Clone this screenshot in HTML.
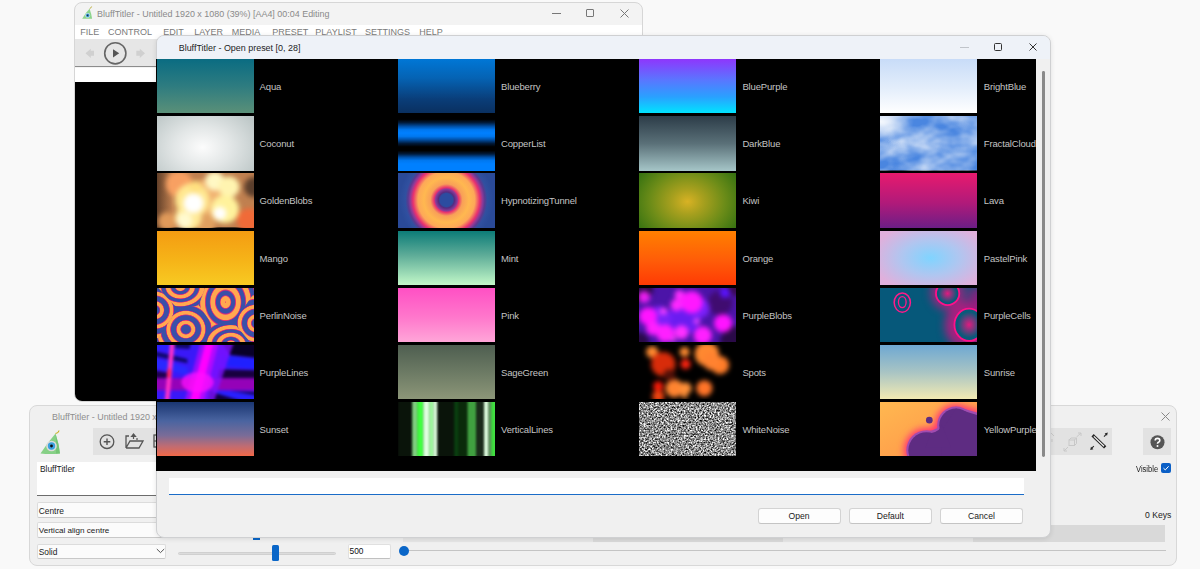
<!DOCTYPE html>
<html><head><meta charset="utf-8">
<style>
*{margin:0;padding:0;box-sizing:border-box}
html,body{width:1200px;height:569px;overflow:hidden;background:#f9f9f9;font-family:"Liberation Sans",sans-serif}
.a{position:absolute}
.t{position:absolute;white-space:nowrap;line-height:1}
#mw{left:74px;top:1.5px;width:568.5px;height:400.5px;border:1px solid #d6d6d6;border-radius:8px;background:#f3f3f3;overflow:hidden}
#bw{left:29px;top:405px;width:1148px;height:160.5px;border:1px solid #d8d8d8;border-radius:8px;background:#f0f0f0;overflow:hidden}
#dlg{left:156px;top:35px;width:894.5px;height:502.5px;border:1px solid #cfd0d2;border-radius:8px;background:#f0f0f0;overflow:hidden;box-shadow:0 1px 5px rgba(0,0,0,.10)}
.th{position:absolute;width:97.2px;height:54.4px;overflow:hidden}
.lb{position:absolute;font-size:9.5px;letter-spacing:-0.15px;color:#c4c4c4;white-space:nowrap;line-height:1}
.mi{position:absolute;top:27.5px;font-size:9px;color:#7a7a7a;white-space:nowrap;line-height:1}
.btn{position:absolute;top:508.3px;height:16px;width:83px;background:#fdfdfd;border:1px solid #d3d3d3;border-bottom-color:#c4c4c4;border-radius:3px;font-size:8.6px;color:#1a1a1a;text-align:center;line-height:14px}
.fld{position:absolute;background:#fbfbfb;border:1px solid #dcdcdc;border-bottom-color:#c8c8c8;border-radius:2px;font-size:8.4px;color:#1a1a1a;white-space:nowrap;line-height:1}
</style></head>
<body>
<!-- MAIN WINDOW -->
<div id="mw" class="a">
  <div class="a" style="left:0;top:22px;width:100%;height:14.2px;background:#fff"></div>
  <div class="a" style="left:0;top:36.2px;width:100%;height:28.8px;background:#e6e6e6;border-bottom:1px solid #8c8c8c"></div>
  <div class="a" style="left:0;top:65px;width:100%;height:14.5px;background:#fff"></div>
  <div class="a" style="left:0;top:79.5px;width:100%;height:330px;background:#000;border-radius:0 0 7px 7px"></div>
</div>
<!-- main title -->
<svg class="a" style="left:80px;top:5px" width="14" height="16" viewBox="0 0 14 16">
  <path d="M2.2,13.8Q6,7 9.6,3.7Q11.5,9 12.1,13.8Z" fill="#8cd48c"/>
  <circle cx="7.7" cy="10.4" r="2.4" fill="#d8e8f0"/><circle cx="7.7" cy="10.4" r="1.8" fill="#3a9ad8"/><circle cx="7.6" cy="10.4" r="0.8" fill="#1a2a3a"/>
  <path d="M9.6,3.7q1.5,-0.5 2,-2.2" stroke="#b8a830" stroke-width="0.9" fill="none"/>
</svg>
<div class="t" style="left:97px;top:9.6px;font-size:8.95px;color:#8a8a8a">BluffTitler - Untitled 1920 x 1080 (39%) [AA4] 00:04 Editing</div>
<div class="a" style="left:551.5px;top:13px;width:9px;height:1px;background:#777"></div>
<div class="a" style="left:586px;top:9px;width:8px;height:8px;border:1px solid #777;border-radius:1px"></div>
<svg class="a" style="left:619.5px;top:8.5px" width="9" height="9" viewBox="0 0 9 9"><path d="M0.5,0.5L8.5,8.5M8.5,0.5L0.5,8.5" stroke="#777" stroke-width="1"/></svg>
<div class="mi" style="left:80.3px">FILE</div>
<div class="mi" style="left:108px">CONTROL</div>
<div class="mi" style="left:163.3px">EDIT</div>
<div class="mi" style="left:194.2px">LAYER</div>
<div class="mi" style="left:231.7px">MEDIA</div>
<div class="mi" style="left:272.3px">PRESET</div>
<div class="mi" style="left:315.3px">PLAYLIST</div>
<div class="mi" style="left:365px">SETTINGS</div>
<div class="mi" style="left:419.3px">HELP</div>
<!-- toolbar icons -->
<svg class="a" style="left:84px;top:48px" width="13" height="11" viewBox="0 0 13 11"><path d="M1.5,5.3L6.8,0.7V2.8H10V7.8H6.8V9.9Z" fill="#d0d0d0"/></svg>
<svg class="a" style="left:134px;top:48px" width="13" height="11" viewBox="0 0 13 11"><path d="M11,5.3L5.8,0.7V2.8H2.3V7.8H5.8V9.9Z" fill="#d0d0d0"/></svg>
<svg class="a" style="left:103px;top:41px" width="25" height="25" viewBox="0 0 25 25"><circle cx="12.3" cy="12.3" r="10.6" fill="none" stroke="#666" stroke-width="1.6"/><path d="M10,8.3L16.2,12.3L10,16.6Z" fill="#555"/></svg>

<!-- BOTTOM WINDOW -->
<div id="bw" class="a"></div>
<div class="t" style="left:52px;top:412.5px;font-size:8.95px;color:#8e8e8e">BluffTitler - Untitled 1920 x 1080 (39%)</div>
<svg class="a" style="left:1160.5px;top:411.5px" width="9" height="9" viewBox="0 0 9 9"><path d="M0.5,0.5L8.5,8.5M8.5,0.5L0.5,8.5" stroke="#888" stroke-width="1"/></svg>
<svg class="a" style="left:39px;top:430px" width="24" height="26" viewBox="0 0 24 26">
  <path d="M1.5,23.5Q9,12 16.5,3.5Q20,14 21,23.5Q11,24.5 1.5,23.5Z" fill="#86d086"/>
  <path d="M16.5,3.5Q20,14 21,23.5L17,23.8Q17.5,12 16.5,3.5Z" fill="#6ec06e" opacity=".7"/>
  <circle cx="12.5" cy="16" r="5.3" fill="#dcdcdc"/><circle cx="12.5" cy="16" r="3.7" fill="#3aa0e0"/><circle cx="12.5" cy="16" r="1.4" fill="#111"/>
  <path d="M16.5,3.5q3,-0.5 3.5,-3" stroke="#c8b020" stroke-width="1.1" fill="none"/>
</svg>
<div class="a" style="left:93.4px;top:428px;width:1019px;height:27px;background:#e2e2e2"></div>
<div class="a" style="left:1143.2px;top:428px;width:27.5px;height:27px;background:#e2e2e2"></div>
<svg class="a" style="left:99px;top:434px" width="16" height="16" viewBox="0 0 16 16"><circle cx="8" cy="7.7" r="6.8" fill="none" stroke="#555" stroke-width="1.3"/><path d="M8,4.4V11M4.7,7.7H11.3" stroke="#555" stroke-width="1.4"/></svg>
<svg class="a" style="left:125px;top:433px" width="19" height="16" viewBox="0 0 19 16"><path d="M1,15V3H4M1,15H14L18,8H5L1,15" fill="none" stroke="#555" stroke-width="1.3"/><path d="M8.5,6V2M6.5,3.5L8.5,1L10.5,3.5Z" stroke="#555" stroke-width="1.2" fill="#555"/><path d="M12,5V7" stroke="#555" stroke-width="1.2"/></svg>
<svg class="a" style="left:153px;top:434px" width="6" height="15" viewBox="0 0 6 15"><rect x="1" y="1" width="8" height="12" fill="none" stroke="#555" stroke-width="1.3"/><path d="M1,7H6" stroke="#555" stroke-width="1.2"/></svg>
<svg class="a" style="left:1086px;top:429px" width="26" height="26" viewBox="0 0 26 26">
  <path d="M7.8,7.4L18,17.2" stroke="#262626" stroke-width="3.3" stroke-linecap="square"/>
  <path d="M7.8,7.4L18,17.2" stroke="#fafafa" stroke-width="1.2" stroke-linecap="butt"/>
  <path d="M18,7.6L20.4,5.2" stroke="#262626" stroke-width="1.1"/><path d="M21.8,3.6L18.6,4.4L21,6.8Z" fill="#262626"/>
  <path d="M7.8,17.2L5.6,19.4" stroke="#262626" stroke-width="1.1"/><path d="M4.2,21L5,17.8L7.4,20.2Z" fill="#262626"/>
</svg>
<svg class="a" style="left:1063px;top:432px" width="20" height="20" viewBox="0 0 20 20" opacity=".35">
  <rect x="6" y="8" width="5.5" height="5.5" fill="none" stroke="#999" stroke-width="1"/><path d="M6,8L8,6H13.5V11.5L11.5,13.5M11.5,8L13.5,6" stroke="#999" stroke-width="1" fill="none"/>
  <path d="M13.5,5L18,1M18,1H15M18,1V4M5,15L1,19M1,19H4M1,19V16" stroke="#999" stroke-width="1" fill="none"/>
</svg>
<svg class="a" style="left:1050px;top:431px" width="6" height="20" viewBox="0 0 6 20" opacity=".35"><path d="M1,2L4,5M2,8V11" stroke="#999" stroke-width="1"/></svg>
<svg class="a" style="left:1149.5px;top:434.5px" width="15" height="15" viewBox="0 0 15 15"><circle cx="7.5" cy="7.3" r="7" fill="#555"/><path d="M5.2,5.6Q5.2,3.4 7.5,3.4Q9.8,3.4 9.8,5.4Q9.8,6.6 8.4,7.3Q7.5,7.8 7.5,8.8" stroke="#fff" stroke-width="1.6" fill="none"/><circle cx="7.5" cy="11" r="1" fill="#fff"/></svg>
<div class="t" style="left:1136px;top:465.3px;font-size:8.4px;color:#1a1a1a;transform:scaleX(.9);transform-origin:left">Visible</div>
<div class="a" style="left:1161.2px;top:463.2px;width:9.6px;height:9.8px;background:#0b5fc6;border-radius:2px"></div>
<svg class="a" style="left:1161.2px;top:463.2px" width="10" height="10" viewBox="0 0 10 10"><path d="M2.5,5.2L4.3,6.9L7.6,3.3" stroke="#fff" stroke-width="1" fill="none"/></svg>
<div class="t" style="left:1145px;top:510.6px;font-size:8.6px;color:#1a1a1a">0 Keys</div>
<div class="a" style="left:403px;top:525px;width:190px;height:16.7px;background:#e6e6e6"></div>
<div class="a" style="left:593px;top:525px;width:190px;height:16.7px;background:#d9d9d9"></div>
<div class="a" style="left:783px;top:525px;width:190px;height:16.7px;background:#e6e6e6"></div>
<div class="a" style="left:973.3px;top:525px;width:191.7px;height:16.7px;background:#d9d9d9"></div>
<div class="a" style="left:404px;top:550.2px;width:761.5px;height:1px;background:#c4c4c4"></div>
<div class="a" style="left:399.3px;top:545.8px;width:10px;height:10px;border-radius:50%;background:#0a66c8"></div>
<div class="a" style="left:347.5px;top:543.8px;width:43.8px;height:15px;background:#fff;border:1px solid #e0e0e0;border-bottom-color:#c0c0c0;border-radius:2px"></div>
<div class="t" style="left:349.5px;top:547px;font-size:8.4px;color:#111">500</div>
<div class="a" style="left:178px;top:551.5px;width:157.5px;height:3px;background:#dcdcdc;border:1px solid #d0d0d0;border-radius:2px"></div>
<div class="a" style="left:271.75px;top:545px;width:7.5px;height:15.5px;background:#0a66c8;border-radius:1.5px"></div>
<div class="a" style="left:252.5px;top:537px;width:7.5px;height:2.5px;background:#0a66c8"></div>
<div class="a" style="left:36.8px;top:461.8px;width:140px;height:34px;background:#fff;border-bottom:1px solid #6c6c6c"></div>
<div class="t" style="left:40px;top:465.4px;font-size:8.4px;color:#1a1a1a">BluffTitler</div>
<div class="fld" style="left:36.8px;top:502.4px;width:140px;height:15.5px"></div>
<div class="t" style="left:38.7px;top:507px;font-size:8.4px;color:#1a1a1a">Centre</div>
<div class="fld" style="left:36.8px;top:522.3px;width:140px;height:15.5px"></div>
<div class="t" style="left:38.7px;top:526.9px;font-size:8.1px;color:#1a1a1a">Vertical align centre</div>
<div class="fld" style="left:36.8px;top:543.6px;width:129.6px;height:15px"></div>
<div class="t" style="left:38.7px;top:548.1px;font-size:8.4px;color:#1a1a1a">Solid</div>
<svg class="a" style="left:155.5px;top:547.5px" width="9" height="6" viewBox="0 0 9 6"><path d="M0.8,1L4.5,4.6L8.2,1" stroke="#555" stroke-width="1" fill="none"/></svg>

<!-- DIALOG -->
<div id="dlg" class="a">
  <div class="a" style="left:0;top:0;width:100%;height:23px;background:#eef2f8"></div>
  <div class="a" style="left:0;top:23px;width:879px;height:412px;background:#000"></div>
  <div class="a" style="left:885.2px;top:35px;width:2.8px;height:386px;background:#8a8a8a;border-radius:1.4px"></div>
  <div class="a" style="left:12px;top:442px;width:855px;height:17px;background:#fff;border-bottom:1.5px solid #1a6cc8"></div>
</div>
<div class="t" style="left:178.7px;top:44.3px;font-size:8.95px;color:#1c1c1c">BluffTitler - Open preset [0, 28]</div>
<div class="a" style="left:959.5px;top:46.5px;width:9px;height:1px;background:#c0c4ca"></div>
<div class="a" style="left:994px;top:43px;width:8px;height:8px;border:1px solid #333;border-radius:1.5px"></div>
<svg class="a" style="left:1029px;top:43px" width="8" height="8" viewBox="0 0 8 8"><path d="M0.5,0.5L7.5,7.5M7.5,0.5L0.5,7.5" stroke="#333" stroke-width="1"/></svg>
<div class="btn" style="left:757.5px">Open</div>
<div class="btn" style="left:848.8px">Default</div>
<div class="btn" style="left:940px">Cancel</div>
<div class="a" style="left:156px;top:58.8px;width:880px;height:412.2px;background:#000"></div>
<div class="a" style="left:0;top:0;width:1036px;height:569px;overflow:hidden"><div class="th" style="left:157.00px;top:59.00px;background:linear-gradient(#0a6c82,#2e7c80 50%,#5a9078);"></div>
<div class="lb" style="left:259.60px;top:82.00px">Aqua</div>
<div class="th" style="left:398.10px;top:59.00px;background:linear-gradient(#0077d6,#0563b4 35%,#0a3d78 75%,#0a3060);"></div>
<div class="lb" style="left:501.00px;top:82.00px">Blueberry</div>
<div class="th" style="left:639.20px;top:59.00px;background:linear-gradient(#8e36fc,#5878ff 40%,#2aa0ff 70%,#00e4ff);"></div>
<div class="lb" style="left:742.40px;top:82.00px">BluePurple</div>
<div class="th" style="left:880.30px;top:59.00px;background:linear-gradient(#c8dcf8,#e4eefb 55%,#ffffff);"></div>
<div class="lb" style="left:983.80px;top:82.00px">BrightBlue</div>
<div class="th" style="left:157.00px;top:116.17px;background:radial-gradient(ellipse 65% 85% at 47% 57%,#fcfcfc,#e2e6e6 45%,#bcc6c6 100%);"></div>
<div class="lb" style="left:259.60px;top:139.17px">Coconut</div>
<div class="th" style="left:398.10px;top:116.17px;background:linear-gradient(#000 0%,#000 6%,#001a3a 12%,#0050a8 19%,#0078f0 25%,#0080ff 31%,#0078f0 37%,#0050a8 43%,#001a3a 50%,#000 56%,#000 63%,#001a3a 69%,#0050a8 75%,#0078f0 81%,#0080ff 87%,#0080ff 100%);"></div>
<div class="lb" style="left:501.00px;top:139.17px">CopperList</div>
<div class="th" style="left:639.20px;top:116.17px;background:linear-gradient(#2c3c48,#5a7078 50%,#a6c6c8);"></div>
<div class="lb" style="left:742.40px;top:139.17px">DarkBlue</div>
<div class="th" style="left:880.30px;top:116.17px;"><svg width="100%" height="100%" viewBox="0 0 96 54" preserveAspectRatio="none" style="display:block"><defs><filter color-interpolation-filters="sRGB" id="fcf" x="0" y="0" width="100%" height="100%"><feTurbulence type="fractalNoise" baseFrequency="0.035 0.055" numOctaves="3" seed="11"/><feColorMatrix type="matrix" values="0 0 0 0 1  0 0 0 0 1  0 0 0 0 1  1.15 0 0 0 -0.30"/></filter><radialGradient id="fcg" cx="0" cy="0.1" r="0.35"><stop offset="0" stop-color="#fff" stop-opacity=".9"/><stop offset="1" stop-color="#fff" stop-opacity="0"/></radialGradient></defs><rect width="96" height="54" fill="#4a86e0"/><rect width="96" height="54" filter="url(#fcf)"/><rect width="96" height="54" fill="url(#fcg)"/></svg></div>
<div class="lb" style="left:983.80px;top:139.17px">FractalCloud</div>
<div class="th" style="left:157.00px;top:173.34px;"><svg width="100%" height="100%" viewBox="0 0 96 54" preserveAspectRatio="none" style="display:block"><defs><filter color-interpolation-filters="sRGB" id="blgb" x="-30%" y="-30%" width="160%" height="160%"><feGaussianBlur stdDeviation="2.4"/></filter><linearGradient id="gbl"><stop offset="0" stop-color="#3a2418" stop-opacity=".7"/><stop offset=".16" stop-color="#3a2418" stop-opacity="0"/></linearGradient></defs><rect width="96" height="54" fill="#c08050"/><rect width="96" height="54" fill="url(#gbl)"/><g filter="url(#blgb)"><circle cx="96" cy="14" r="10" fill="#5a3e2c" opacity="1"/><circle cx="22" cy="11" r="13" fill="#f8a062" opacity="1"/><circle cx="91" cy="47" r="12" fill="#f06a38" opacity="1"/><circle cx="50" cy="24" r="18" fill="#f0b070" opacity="1"/><circle cx="48" cy="50" r="10" fill="#e0a060" opacity="1"/><circle cx="10" cy="48" r="9" fill="#e09a5a" opacity="1"/><circle cx="35" cy="27" r="17" fill="#ffe890" opacity="1"/><circle cx="31" cy="44" r="13" fill="#ffea98" opacity="1"/><circle cx="57" cy="8" r="9.5" fill="#fff8c4" opacity="1"/><circle cx="71" cy="14" r="10.5" fill="#fff4b0" opacity="1"/><circle cx="67" cy="36" r="14" fill="#fff29c" opacity="1"/><circle cx="36" cy="30" r="10" fill="#ffffff" opacity="1"/><circle cx="62" cy="40" r="6.5" fill="#ffffff" opacity="1"/><circle cx="27" cy="47" r="8" fill="#fffad0" opacity="1"/><circle cx="38" cy="14" r="6" fill="#ffe080" opacity="1"/></g></svg></div>
<div class="lb" style="left:259.60px;top:196.34px">GoldenBlobs</div>
<div class="th" style="left:398.10px;top:173.34px;background:radial-gradient(circle at 48.4px 27px,#2c4ca0 0,#2c4ca0 6.5px,#542c80 8px,#8a3a98 10.9px,#e83070 12.3px,#f8a058 16px,#ffb850 22.5px,#fda858 28.4px,#e83070 33.4px,#8a3a98 36.3px,#5a3a90 38.4px,#3050a0 41px,#2a4a98 47px,#2a4a98 80px);"></div>
<div class="lb" style="left:501.00px;top:196.34px">HypnotizingTunnel</div>
<div class="th" style="left:639.20px;top:173.34px;background:radial-gradient(ellipse 62px 50px at 50% 52%,#d8b224 0,#a8a01e 25%,#6c8c18 60%,#2e6e10 100%);"></div>
<div class="lb" style="left:742.40px;top:196.34px">Kiwi</div>
<div class="th" style="left:880.30px;top:173.34px;background:linear-gradient(#e81a6e,#b01a7a 55%,#6c1e86);"></div>
<div class="lb" style="left:983.80px;top:196.34px">Lava</div>
<div class="th" style="left:157.00px;top:230.51px;background:linear-gradient(#f49c12,#f6b418 55%,#f8ca22);"></div>
<div class="lb" style="left:259.60px;top:253.51px">Mango</div>
<div class="th" style="left:398.10px;top:230.51px;background:linear-gradient(#0c7c78,#5eac98 45%,#c2f8c8);"></div>
<div class="lb" style="left:501.00px;top:253.51px">Mint</div>
<div class="th" style="left:639.20px;top:230.51px;background:linear-gradient(#ff8000,#ff5c08 55%,#ff3a04);"></div>
<div class="lb" style="left:742.40px;top:253.51px">Orange</div>
<div class="th" style="left:880.30px;top:230.51px;background:radial-gradient(ellipse 60% 65% at 52% 50%,#80d4ff,#b0c6f0 50%,#e0b0dc 100%);"></div>
<div class="lb" style="left:983.80px;top:253.51px">PastelPink</div>
<div class="th" style="left:157.00px;top:287.68px;"><svg width="100%" height="100%" viewBox="0 0 96 54" preserveAspectRatio="none" style="display:block"><defs><radialGradient id="pn0" gradientUnits="userSpaceOnUse" cx="23" cy="-1" r="9.5" fx="23" fy="-1" spreadMethod="repeat" gradientTransform="translate(23 -1) scale(1 0.8) translate(-23 1)"><stop offset="0" stop-color="#e83070"/><stop offset="0.08" stop-color="#ffa850"/><stop offset="0.46" stop-color="#ffa850"/><stop offset="0.52" stop-color="#e83070"/><stop offset="0.56" stop-color="#8a3a98"/><stop offset="0.6" stop-color="#3a50a8"/><stop offset="0.9" stop-color="#3a50a8"/><stop offset="0.95" stop-color="#8a3a98"/><stop offset="1.0" stop-color="#e83070"/></radialGradient><radialGradient id="pn1" gradientUnits="userSpaceOnUse" cx="-2" cy="22" r="9.5" fx="-2" fy="22" spreadMethod="repeat" gradientTransform="translate(-2 22) scale(1 1.0) translate(2 -22)"><stop offset="0" stop-color="#3a50a8"/><stop offset="0.42" stop-color="#3a50a8"/><stop offset="0.47" stop-color="#8a3a98"/><stop offset="0.52" stop-color="#e83070"/><stop offset="0.58" stop-color="#ffa850"/><stop offset="0.88" stop-color="#ffa850"/><stop offset="0.93" stop-color="#e83070"/><stop offset="0.97" stop-color="#8a3a98"/><stop offset="1.0" stop-color="#3a50a8"/></radialGradient><radialGradient id="pn2" gradientUnits="userSpaceOnUse" cx="67.7" cy="14" r="10" fx="67.7" fy="14" spreadMethod="repeat" gradientTransform="translate(67.7 14) scale(1 1.2) translate(-67.7 -14)"><stop offset="0" stop-color="#e83070"/><stop offset="0.08" stop-color="#ffa850"/><stop offset="0.46" stop-color="#ffa850"/><stop offset="0.52" stop-color="#e83070"/><stop offset="0.56" stop-color="#8a3a98"/><stop offset="0.6" stop-color="#3a50a8"/><stop offset="0.9" stop-color="#3a50a8"/><stop offset="0.95" stop-color="#8a3a98"/><stop offset="1.0" stop-color="#e83070"/></radialGradient><radialGradient id="pn3" gradientUnits="userSpaceOnUse" cx="28.5" cy="41" r="10" fx="28.5" fy="41" spreadMethod="repeat" gradientTransform="translate(28.5 41) scale(1 0.95) translate(-28.5 -41)"><stop offset="0" stop-color="#3a50a8"/><stop offset="0.42" stop-color="#3a50a8"/><stop offset="0.47" stop-color="#8a3a98"/><stop offset="0.52" stop-color="#e83070"/><stop offset="0.58" stop-color="#ffa850"/><stop offset="0.88" stop-color="#ffa850"/><stop offset="0.93" stop-color="#e83070"/><stop offset="0.97" stop-color="#8a3a98"/><stop offset="1.0" stop-color="#3a50a8"/></radialGradient><radialGradient id="pn4" gradientUnits="userSpaceOnUse" cx="73" cy="56" r="9.5" fx="73" fy="56" spreadMethod="repeat" gradientTransform="translate(73 56) scale(1 0.8) translate(-73 -56)"><stop offset="0" stop-color="#e83070"/><stop offset="0.08" stop-color="#ffa850"/><stop offset="0.46" stop-color="#ffa850"/><stop offset="0.52" stop-color="#e83070"/><stop offset="0.56" stop-color="#8a3a98"/><stop offset="0.6" stop-color="#3a50a8"/><stop offset="0.9" stop-color="#3a50a8"/><stop offset="0.95" stop-color="#8a3a98"/><stop offset="1.0" stop-color="#e83070"/></radialGradient><radialGradient id="pn5" gradientUnits="userSpaceOnUse" cx="98" cy="35" r="9.5" fx="98" fy="35" spreadMethod="repeat" gradientTransform="translate(98 35) scale(1 1.0) translate(-98 -35)"><stop offset="0" stop-color="#3a50a8"/><stop offset="0.42" stop-color="#3a50a8"/><stop offset="0.47" stop-color="#8a3a98"/><stop offset="0.52" stop-color="#e83070"/><stop offset="0.58" stop-color="#ffa850"/><stop offset="0.88" stop-color="#ffa850"/><stop offset="0.93" stop-color="#e83070"/><stop offset="0.97" stop-color="#8a3a98"/><stop offset="1.0" stop-color="#3a50a8"/></radialGradient><filter color-interpolation-filters="sRGB" id="pnbl" x="0" y="0" width="100%" height="100%"><feGaussianBlur stdDeviation="0.7"/></filter></defs><rect width="96" height="54" fill="#3a50a8"/><g filter="url(#pnbl)"><polygon points="-1.00,-2.00 48.20,-2.00 41.51,17.94 19.94,20.76" fill="url(#pn0)" stroke="url(#pn0)" stroke-width="0.8"/><polygon points="-2.00,-2.00 -1.00,-2.00 19.94,20.76 -2.00,55.98" fill="url(#pn1)" stroke="url(#pn1)" stroke-width="0.8"/><polygon points="48.20,-2.00 98.00,-2.00 98.00,2.64 76.07,34.28 54.63,36.98 41.51,17.94" fill="url(#pn2)" stroke="url(#pn2)" stroke-width="0.8"/><polygon points="48.22,56.00 -2.00,56.00 -2.00,55.98 19.94,20.76 41.51,17.94 54.63,36.98" fill="url(#pn3)" stroke="url(#pn3)" stroke-width="0.8"/><polygon points="94.32,56.00 48.22,56.00 54.63,36.98 76.07,34.28" fill="url(#pn4)" stroke="url(#pn4)" stroke-width="0.8"/><polygon points="98.00,2.64 98.00,56.00 94.32,56.00 76.07,34.28" fill="url(#pn5)" stroke="url(#pn5)" stroke-width="0.8"/></g></svg></div>
<div class="lb" style="left:259.60px;top:310.68px">PerlinNoise</div>
<div class="th" style="left:398.10px;top:287.68px;background:linear-gradient(#ff50c4,#ff78cc 55%,#ffa6d8);"></div>
<div class="lb" style="left:501.00px;top:310.68px">Pink</div>
<div class="th" style="left:639.20px;top:287.68px;"><svg width="100%" height="100%" viewBox="0 0 96 54" preserveAspectRatio="none" style="display:block"><defs><filter color-interpolation-filters="sRGB" id="blpb" x="-30%" y="-30%" width="160%" height="160%"><feGaussianBlur stdDeviation="2.6"/></filter></defs><rect width="96" height="54" fill="#4c14a8"/><g filter="url(#blpb)"><circle cx="0" cy="0" r="14" fill="#2a0a48" opacity="1"/><circle cx="96" cy="54" r="16" fill="#2a0a48" opacity="1"/><circle cx="96" cy="0" r="8" fill="#3a0a50" opacity="1"/><circle cx="0" cy="54" r="10" fill="#2a0a48" opacity="1"/><circle cx="80" cy="15" r="12" fill="#400c70" opacity="1"/><circle cx="45" cy="30" r="16" fill="#6a1cf0" opacity="1"/><circle cx="60" cy="20" r="10" fill="#7a20f8" opacity="1"/><circle cx="20" cy="30" r="12" fill="#7a20f8" opacity="1"/><circle cx="5" cy="9" r="6" fill="#ff20ff" opacity="0.9"/><circle cx="40" cy="7" r="5" fill="#ff30ff" opacity="1"/><circle cx="52" cy="14" r="11" fill="#ff18ff" opacity="1"/><circle cx="37" cy="17" r="6" fill="#ff28ff" opacity="1"/><circle cx="24" cy="23" r="3.5" fill="#ff40ff" opacity="1"/><circle cx="9" cy="28" r="9" fill="#ff14ff" opacity="1"/><circle cx="14" cy="40" r="7" fill="#ff20ff" opacity="1"/><circle cx="26" cy="45" r="9" fill="#ff20ff" opacity="1"/><circle cx="42" cy="44" r="7" fill="#ff30ff" opacity="1"/><circle cx="63" cy="47" r="9" fill="#ff20ff" opacity="1"/><circle cx="83" cy="35" r="9" fill="#ff14ff" opacity="1"/><circle cx="57" cy="33" r="2.8" fill="#ff48ff" opacity="1"/><circle cx="34" cy="51" r="2.5" fill="#ff48ff" opacity="1"/><circle cx="85" cy="5" r="5" fill="#5a14ff" opacity="1"/></g></svg></div>
<div class="lb" style="left:742.40px;top:310.68px">PurpleBlobs</div>
<div class="th" style="left:880.30px;top:287.68px;"><svg width="100%" height="100%" viewBox="0 0 96 54" preserveAspectRatio="none" style="display:block"><defs><radialGradient id="pcr"><stop offset="0" stop-color="#e01a80"/><stop offset=".8" stop-color="#0a5a7a"/></radialGradient><filter color-interpolation-filters="sRGB" id="pcg1" x="-50%" y="-50%" width="200%" height="200%"><feGaussianBlur stdDeviation="4"/></filter><filter color-interpolation-filters="sRGB" id="pcb"><feGaussianBlur stdDeviation="0.6"/></filter></defs><rect width="96" height="54" fill="#06587a"/><g filter="url(#pcg1)"><circle cx="67" cy="5" r="17" fill="#c01880" opacity=".75"/><ellipse cx="87" cy="37" rx="23" ry="24" fill="#c01880" opacity=".85"/><rect x="88" y="0" width="20" height="30" fill="#a01880" opacity=".8"/></g><g filter="url(#pcb)"><ellipse cx="22" cy="14.5" rx="8" ry="9.5" fill="none" stroke="#ff1a8a" stroke-width="1.5"/><ellipse cx="22" cy="14" rx="3.8" ry="5.5" fill="none" stroke="#ff1a8a" stroke-width="1.3"/><circle cx="66.8" cy="5.5" r="11.5" fill="url(#pcr)" stroke="#ff108a" stroke-width="1.8"/><ellipse cx="88" cy="36.5" rx="14.5" ry="16" fill="url(#pcr)" stroke="#ff108a" stroke-width="1.8"/></g></svg></div>
<div class="lb" style="left:983.80px;top:310.68px">PurpleCells</div>
<div class="th" style="left:157.00px;top:344.85px;"><svg width="100%" height="100%" viewBox="0 0 96 54" preserveAspectRatio="none" style="display:block"><defs><filter color-interpolation-filters="sRGB" id="plb" x="0" y="0" width="100%" height="100%"><feGaussianBlur stdDeviation="1.4"/></filter></defs><rect width="96" height="54" fill="#3a18f8"/><g filter="url(#plb)"><rect x="-3" y="-3" width="102" height="60" fill="#3a18f8"/><polygon points="64,-3 99,-3 99,13 72,10" fill="#080028"/><polygon points="62,24 99,25 99,33 60,33" fill="#180040"/><polygon points="-3,6 30,14 30,18 -3,11" fill="#10086a"/><polygon points="16,-3 34,-3 32,4 18,3" fill="#10086a"/><polygon points="-3,25 14,28 14,33 -3,33" fill="#200050"/><polygon points="52,45 99,47 99,57 50,57" fill="#100040"/><polygon points="55,43 99,50 99,57 88,57 55,47" fill="#2a20ff"/><polygon points="62,10 99,14 99,24 62,20" fill="#2020ff"/><polygon points="-3,-3 16,-3 16,6 -3,4" fill="#2a20ff"/><polygon points="-3,13 30,22 30,30 -3,22" fill="#2a28ff"/><rect x="-3" y="33" width="102" height="12" fill="#a000b0" opacity=".9"/><polygon points="55,-3 76,-3 56,57 41,57" fill="#8010ff" opacity=".8"/><polygon points="43,-3 61,-3 46,57 27,57" fill="#ff00ff" opacity=".45"/><polygon points="48,-3 56,-3 41,57 32,57" fill="#ff00ff"/><ellipse cx="40" cy="37" rx="16" ry="10" fill="#ff10ff" opacity=".75"/><polygon points="13,-3 17.5,-3 12,57 7.5,57" fill="#ff30c8"/><ellipse cx="12" cy="28" rx="2" ry="5" fill="#ff2060"/></g></svg></div>
<div class="lb" style="left:259.60px;top:367.85px">PurpleLines</div>
<div class="th" style="left:398.10px;top:344.85px;background:linear-gradient(#4e5e50,#6c7a64 50%,#8c9678);"></div>
<div class="lb" style="left:501.00px;top:367.85px">SageGreen</div>
<div class="th" style="left:639.20px;top:344.85px;"><svg width="100%" height="100%" viewBox="0 0 96 54" preserveAspectRatio="none" style="display:block"><defs><filter color-interpolation-filters="sRGB" id="blsp" x="-30%" y="-30%" width="160%" height="160%"><feGaussianBlur stdDeviation="2.8"/></filter></defs><rect width="96" height="54" fill="#000"/><g filter="url(#blsp)"><circle cx="13" cy="7" r="6" fill="#ff8a30" opacity="1"/><circle cx="24" cy="19" r="12" fill="#d82c0a" opacity="1"/><circle cx="45" cy="7" r="5" fill="#ff8a30" opacity="1"/><circle cx="46" cy="19" r="5" fill="#ff2410" opacity="1"/><circle cx="67" cy="9" r="12" fill="#ff8830" opacity="1"/><circle cx="80" cy="20" r="9" fill="#ff7c28" opacity="1"/><circle cx="72" cy="16" r="9" fill="#ff8230" opacity="1"/><circle cx="19" cy="41" r="5" fill="#ff1a08" opacity="1"/><circle cx="35" cy="43" r="9" fill="#ff8430" opacity="1"/><circle cx="46" cy="43" r="6" fill="#ff9038" opacity="1"/><circle cx="64.5" cy="43" r="8" fill="#ff7428" opacity="1"/><circle cx="19" cy="51" r="6" fill="#f04410" opacity="1"/><circle cx="45" cy="50" r="3" fill="#ff9038" opacity="1"/><circle cx="30" cy="30" r="6" fill="#501008" opacity="1"/></g></svg></div>
<div class="lb" style="left:742.40px;top:367.85px">Spots</div>
<div class="th" style="left:880.30px;top:344.85px;background:linear-gradient(#6ea8d2,#a8c4c4 50%,#f2eab2);"></div>
<div class="lb" style="left:983.80px;top:367.85px">Sunrise</div>
<div class="th" style="left:157.00px;top:402.02px;background:linear-gradient(#1a3672,#4a64a0 35%,#7a6c98 62%,#c06c72 82%,#f06848);"></div>
<div class="lb" style="left:259.60px;top:425.02px">Sunset</div>
<div class="th" style="left:398.10px;top:402.02px;"><svg width="100%" height="100%" viewBox="0 0 96 54" preserveAspectRatio="none" style="display:block"><defs><filter color-interpolation-filters="sRGB" id="vlb" x="-5%" y="0" width="110%" height="100%"><feGaussianBlur stdDeviation="0.9 0"/></filter></defs><rect width="96" height="54" fill="#000"/><g filter="url(#vlb)"><rect x="0" y="-5" width="14" height="64" fill="#0a140a"/><rect x="14" y="-5" width="5" height="64" fill="#80d080"/><rect x="19" y="-5" width="6" height="64" fill="#40ff40"/><rect x="25" y="-5" width="6" height="64" fill="#e0ffe0"/><rect x="31" y="-5" width="4" height="64" fill="#a0ffa0"/><rect x="35" y="-5" width="4" height="64" fill="#e0ffe0"/><rect x="39" y="-5" width="16.5" height="64" fill="#0a140a"/><rect x="55.5" y="-5" width="4.5" height="64" fill="#0a4010"/><rect x="60" y="-5" width="8.599999999999994" height="64" fill="#0a2a0a"/><rect x="68.6" y="-5" width="8.700000000000003" height="64" fill="#40a040"/><rect x="77.3" y="-5" width="7.700000000000003" height="64" fill="#1a2a1a"/><rect x="85" y="-5" width="4.299999999999997" height="64" fill="#e0ffe0"/><rect x="89.3" y="-5" width="2.700000000000003" height="64" fill="#609060"/><rect x="92" y="-5" width="6" height="64" fill="#40e040"/></g></svg></div>
<div class="lb" style="left:501.00px;top:425.02px">VerticalLines</div>
<div class="th" style="left:639.20px;top:402.02px;"><svg width="100%" height="100%" viewBox="0 0 96 54" preserveAspectRatio="none" style="display:block"><defs><filter color-interpolation-filters="sRGB" id="wnf" x="0" y="0" width="100%" height="100%"><feTurbulence type="fractalNoise" baseFrequency="0.6" numOctaves="2" seed="7"/><feColorMatrix type="matrix" values="1 0 0 0 0 1 0 0 0 0 1 0 0 0 0 0 0 0 0 1"/><feComponentTransfer><feFuncR type="linear" slope="1.9" intercept="-0.40"/><feFuncG type="linear" slope="1.9" intercept="-0.40"/><feFuncB type="linear" slope="1.9" intercept="-0.40"/></feComponentTransfer></filter></defs><rect width="96" height="54" fill="#999" filter="url(#wnf)"/></svg></div>
<div class="lb" style="left:742.40px;top:425.02px">WhiteNoise</div>
<div class="th" style="left:880.30px;top:402.02px;"><svg width="100%" height="100%" viewBox="0 0 96 54" preserveAspectRatio="none" style="display:block"><defs><linearGradient id="ypg" x1="0" y1="0" x2="1" y2="1"><stop offset="0" stop-color="#ffb850"/><stop offset="1" stop-color="#ff9048"/></linearGradient><filter color-interpolation-filters="sRGB" id="ypb1" x="-50%" y="-50%" width="200%" height="200%"><feGaussianBlur stdDeviation="3.5"/></filter></defs><rect width="96" height="54" fill="url(#ypg)"/><g filter="url(#ypb1)" fill="#ff2a78"><circle cx="75" cy="23" r="20.5"/><circle cx="46" cy="48" r="22"/><polygon points="75,2.5 100,9 100,60 60,60 58,23"/><path d="M46,27 Q56,25 57,22 L70,45 L45,45Z"/></g><g fill="#a04cb0"><circle cx="75" cy="23" r="18.5"/><circle cx="46" cy="48" r="20"/><polygon points="75,4.5 98,11 98,60 60,60 60,25"/><path d="M48,29 Q58,27 59,22 L70,45 L45,45Z"/></g><g fill="#5e2c82"><circle cx="75" cy="23" r="16.5"/><circle cx="46" cy="48" r="18"/><polygon points="75,6.5 96,13 96,60 60,60 62,27"/><path d="M50,31 Q60,29 61,22 L70,45 L45,45Z"/></g><circle cx="48.7" cy="18" r="3.3" fill="#5e2c82"/></svg></div>
<div class="lb" style="left:983.80px;top:425.02px">YellowPurpleBlobs</div></div>
</body></html>
